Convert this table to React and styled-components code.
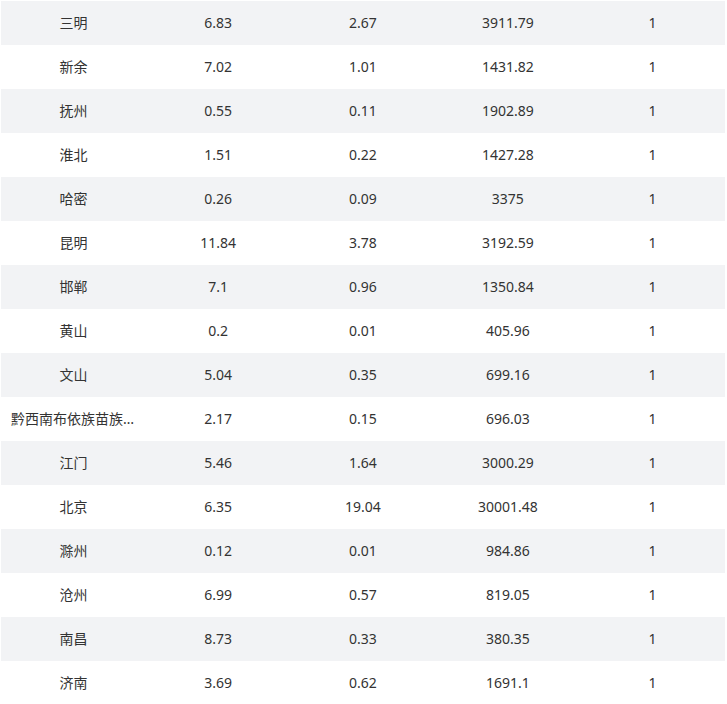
import React from 'react';
import styled, { createGlobalStyle } from 'styled-components';

const GlobalStyle = createGlobalStyle`
  body {
    margin: 0;
    background: #fff;
    font-family: "Noto Sans", "Noto Sans CJK SC", sans-serif;
  }
`;

const Wrapper = styled.div`
  padding: 1px 0 0 1px;
  width: 724px;
`;

const Table = styled.table`
  width: 100%;
  border-collapse: collapse;
  table-layout: fixed;
  font-size: 14px;
  color: #333;
`;

const Row = styled.tr`
  height: 44px;
  background: ${(p) => (p.$striped ? '#f2f3f5' : '#fff')};
`;

const Cell = styled.td`
  padding: 0 10px;
  text-align: center;
  white-space: nowrap;
  overflow: hidden;
  text-overflow: ellipsis;
  line-height: 44px;
`;

const rows = [
  ['三明', '6.83', '2.67', '3911.79', '1'],
  ['新余', '7.02', '1.01', '1431.82', '1'],
  ['抚州', '0.55', '0.11', '1902.89', '1'],
  ['淮北', '1.51', '0.22', '1427.28', '1'],
  ['哈密', '0.26', '0.09', '3375', '1'],
  ['昆明', '11.84', '3.78', '3192.59', '1'],
  ['邯郸', '7.1', '0.96', '1350.84', '1'],
  ['黄山', '0.2', '0.01', '405.96', '1'],
  ['文山', '5.04', '0.35', '699.16', '1'],
  ['黔西南布依族苗族自治州', '2.17', '0.15', '696.03', '1'],
  ['江门', '5.46', '1.64', '3000.29', '1'],
  ['北京', '6.35', '19.04', '30001.48', '1'],
  ['滁州', '0.12', '0.01', '984.86', '1'],
  ['沧州', '6.99', '0.57', '819.05', '1'],
  ['南昌', '8.73', '0.33', '380.35', '1'],
  ['济南', '3.69', '0.62', '1691.1', '1'],
];

const App = () => (
  <Wrapper>
    <GlobalStyle />
    <Table>
      <tbody>
        {rows.map((r, i) => (
          <Row key={r[0]} $striped={i % 2 === 0}>
            {r.map((v, j) => (
              <Cell key={j}>{v}</Cell>
            ))}
          </Row>
        ))}
      </tbody>
    </Table>
  </Wrapper>
);

export default App;
